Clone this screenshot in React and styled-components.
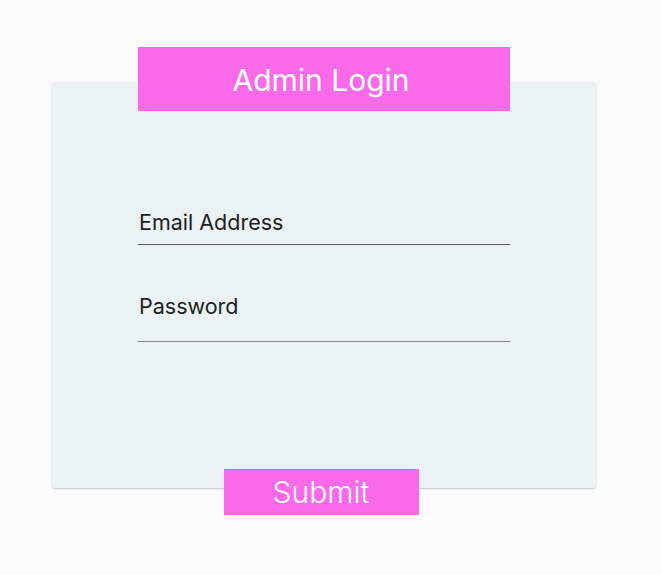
import React from "react";
import styled, { createGlobalStyle } from "styled-components";

const Global = createGlobalStyle`
  html, body { margin: 0; padding: 0; background: #fbfbfb; }
  body { font-family: Inter, "Noto Sans", sans-serif; }
`;

const Page = styled.div`
  width: 661px;
  height: 575px;
  padding-top: 82px;
  padding-left: 52px;
  box-sizing: border-box;
`;

const Card = styled.form`
  width: 544px;
  height: 406px;
  box-sizing: border-box;
  background: #eaf2f3;
  border-radius: 3px;
  box-shadow: 0 1px 2px rgba(0, 0, 0, 0.22);
  display: flex;
  flex-direction: column;
  align-items: center;
`;

const Header = styled.h1`
  margin: -35px 0 0 0;
  width: 372px;
  height: 64px;
  background: #f96ae8;
  color: #fff;
  font-family: Inter, sans-serif;
  font-weight: 400;
  font-size: 30px;
  display: flex;
  align-items: center;
  justify-content: center;
  padding: 2px 6px 0 0;
  box-sizing: border-box;
`;

const Fields = styled.div`
  width: 372px;
  display: flex;
  flex-direction: column;
  margin-top: 99px;
`;

const Field = styled.label`
  display: flex;
  flex-direction: column;
  border-bottom: 1px solid ${(p) => p.$line};
  margin-bottom: ${(p) => p.$gap}px;
  height: ${(p) => p.$h}px;
  box-sizing: border-box;
`;

const Label = styled.span`
  font-family: Inter, sans-serif;
  font-size: 21.5px;
  color: #1e1e1e;
  line-height: 24px;
  padding-left: 1px;
`;

const Spacer = styled.div`
  flex: 1;
`;

const Submit = styled.button`
  margin: auto 6px -27px 0;
  width: 195px;
  height: 46px;
  border: none;
  background: #f96ae8;
  color: #fff;
  font-family: Inter, sans-serif;
  font-weight: 300;
  font-size: 30px;
  padding: 0;
  cursor: pointer;
`;

export default function App() {
  return (
    <>
      <Global />
      <Page>
        <Card onSubmit={(e) => e.preventDefault()}>
          <Header>Admin Login</Header>
          <Fields>
            <Field $line="#5c5c5c" $gap={49} $h={35}>
              <Label>Email Address</Label>
              <Spacer />
            </Field>
            <Field $line="#8a8a8a" $gap={0} $h={48}>
              <Label>Password</Label>
              <Spacer />
            </Field>
          </Fields>
          <Submit type="submit">Submit</Submit>
        </Card>
      </Page>
    </>
  );
}
